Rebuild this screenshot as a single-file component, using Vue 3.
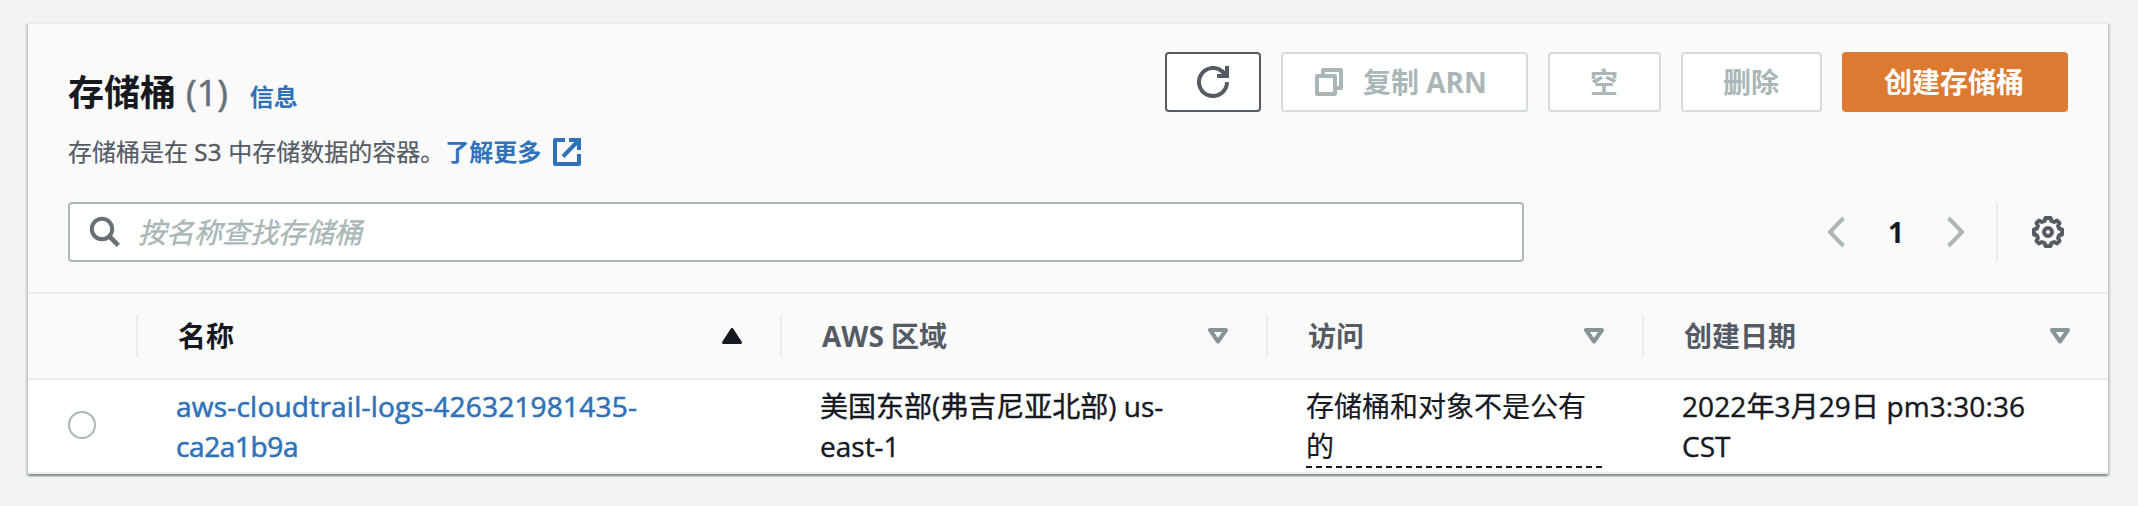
<script setup>
const columns = [
  { key: 'name', label: '名称', sorted: true },
  { key: 'region', label: 'AWS 区域', sorted: false },
  { key: 'access', label: '访问', sorted: false },
  { key: 'created', label: '创建日期', sorted: false },
]
const buckets = [
  {
    name: ['aws-cloudtrail-logs-426321981435-', 'ca2a1b9a'],
    region: ['美国东部(弗吉尼亚北部) us-', 'east-1'],
    access: '存储桶和对象不是公有的',
    created: ['2022年3月29日 pm3:30:36', 'CST'],
  },
]
</script>

<template>
  <main class="page" lang="zh-CN">
    <section class="card">
      <header class="head">
        <div class="heading">
          <h2 class="title">
            <span>存储桶</span><span class="count">(1)</span><a class="info">信息</a>
          </h2>
          <p class="desc">
            <span class="desc-text">存储桶是在 <span class="s3">S3</span> 中存储数据的容器。</span>
            <a class="more">了解更多</a>
            <svg class="ext" width="28" height="28" viewBox="0 0 28 28" fill="none" stroke="currentColor" stroke-width="4">
              <path d="M12 2H2v24h24V16" stroke-linejoin="round" />
              <path d="M16 2h10v10M26 2L10 18.500" />
            </svg>
          </p>
        </div>
        <div class="actions">
          <button class="btn refresh">
            <svg width="32" height="32" viewBox="0 0 32 32" fill="none" stroke="currentColor" stroke-width="4">
              <path d="M30 16a14 14 0 1 1-4.200-10" />
              <path d="M30 0v10H20M29 9l-4-4" />
            </svg>
          </button>
          <button class="btn off copy">
            <svg width="28" height="28" viewBox="0 0 28 28" fill="none" stroke="currentColor" stroke-width="4" stroke-linejoin="round">
              <path d="M2 8h18v18H2z" />
              <path d="M8 8V2h18v18h-6" />
            </svg>
            <span>复制 ARN</span>
          </button>
          <button class="btn off empty">空</button>
          <button class="btn off delete">删除</button>
          <button class="btn primary">创建存储桶</button>
        </div>
      </header>

      <div class="tools">
        <div class="search">
          <svg width="32" height="32" viewBox="0 0 32 32" fill="none" stroke="currentColor" stroke-width="4">
            <circle cx="13" cy="13" r="10.200" />
            <path d="M20.500 20.500l8.800 8.800" stroke-width="4.600" />
          </svg>
          <span class="placeholder">按名称查找存储桶</span>
        </div>
        <nav class="pager">
          <svg class="arrow" width="18" height="32" viewBox="0 0 18 32" fill="none" stroke="currentColor" stroke-width="4">
            <path d="M16.500 2L3 16l13.500 14" />
          </svg>
          <b class="current">1</b>
          <svg class="arrow" width="18" height="32" viewBox="0 0 18 32" fill="none" stroke="currentColor" stroke-width="4">
            <path d="M1.500 2L15 16 1.500 30" />
          </svg>
        </nav>
        <div class="prefs">
          <svg width="32" height="32" viewBox="0 0 32 32" fill="none" stroke="currentColor" stroke-width="4" stroke-linejoin="round">
            <path d="M13.500 2h5l1 3 2.600 1 3-1.400 2.400 2.400-1.400 3 1 2.600 2.900 .9v5l-2.900 .9-1 2.600 1.400 3-2.400 2.400-3-1.400-2.600 1-1 3h-5l-1-3-2.600-1-3 1.400-2.400-2.400 1.400-3-1-2.600L2 18.500v-5l2.900-.9 1-2.600-1.400-3 2.400-2.400 3 1.400 2.600-1z" stroke-width="4" />
            <circle cx="16" cy="16" r="4" />
          </svg>
        </div>
      </div>

      <div class="row thead">
        <div class="pick"></div>
        <div v-for="c in columns" :key="c.key" class="th" :class="{ sorted: c.sorted }">
          <span>{{ c.label }}</span>
          <svg width="20" height="16" viewBox="0 0 20 16" stroke="currentColor" stroke-linejoin="round">
            <path v-if="c.sorted" d="M10 1.500L18.500 14.500H1.500z" fill="currentColor" stroke-width="3" />
            <path v-else d="M2 2h16l-8 11.500z" fill="none" stroke-width="4" />
          </svg>
        </div>
      </div>

      <div v-for="b in buckets" :key="b.name[0]" class="row tbody">
        <div class="pick"><span class="radio"></span></div>
        <div class="td link"><div class="first">{{ b.name[0] }}</div><div class="tail">{{ b.name[1] }}</div></div>
        <div class="td"><div>{{ b.region[0] }}</div><div>{{ b.region[1] }}</div></div>
        <div class="td"><div class="access">{{ b.access }}</div></div>
        <div class="td"><div class="date">{{ b.created[0] }}</div><div>{{ b.created[1] }}</div></div>
      </div>
    </section>
  </main>
</template>

<style>
body {
  margin: 0;
  background: #f2f4f3;
}
</style>

<style scoped>
.page {
  box-sizing: border-box;
  width: 2138px;
  height: 506px;
  padding: 22px 30px 0 28px;
  overflow: hidden;
  background: #f2f4f3;
  color: #16191f;
  font-family: "Open Sans", "Noto Sans CJK SC", sans-serif;
  font-size: 28px;
  line-height: 40px;
}
.card {
  box-sizing: border-box;
  height: 452px;
  border-top: 2px solid #eaeded;
  background: #fafafa;
  box-shadow: 0 2px 2px 0 rgba(0, 28, 36, 0.3), 2px 2px 2px 0 rgba(0, 28, 36, 0.15),
    -2px 2px 2px 0 rgba(0, 28, 36, 0.15);
}
.head {
  display: flex;
  justify-content: space-between;
  box-sizing: border-box;
  height: 178px;
  padding: 28px 40px 0;
}
.heading {
  padding-top: 19px;
}
.title {
  display: flex;
  align-items: baseline;
  margin: 0;
  font-size: 36px;
  line-height: 44px;
}
.count {
  margin-left: 10px;
  color: #687078;
  font-weight: 400;
  -webkit-text-stroke: 0.6px currentColor;
}
.info {
  margin-left: 22px;
  font-size: 24px;
  color: #2f72b9;
}
.desc {
  display: flex;
  align-items: center;
  margin: 17px 0 0;
  color: #545b64;
  font-size: 24px;
  line-height: 32px;
  white-space: nowrap;
}
.desc-text {
  -webkit-text-stroke: 0.2px currentColor;
}
.s3 {
  letter-spacing: 0.4px;
  -webkit-text-stroke: 0.5px currentColor;
}
.more {
  margin-left: 1px;
  color: #2f72b9;
  font-weight: 700;
}
.ext {
  margin-left: 12px;
  color: #2f72b9;
}
.actions {
  display: flex;
  gap: 20px;
}
.btn {
  display: flex;
  align-items: center;
  justify-content: center;
  box-sizing: border-box;
  height: 60px;
  padding: 0 1px 0 0;
  border: 2px solid #545b64;
  border-radius: 4px;
  background: #fff;
  color: #545b64;
  font: inherit;
  font-weight: 700;
  line-height: 40px;
}
.refresh {
  width: 96px;
  padding: 0;
}
.off {
  border-color: #d5dbdb;
  color: #aab7b8;
}
.copy {
  justify-content: flex-start;
  gap: 20px;
  width: 247px;
  padding-left: 32px;
}
.empty {
  width: 113px;
}
.delete {
  width: 141px;
}
.primary {
  width: 226px;
  padding-right: 2px;
  border-color: #dd7a32;
  background: #dd7a32;
  color: #fff;
}
.tools {
  display: flex;
  box-sizing: border-box;
  height: 92px;
  padding: 0 40px 30px;
  border-bottom: 2px solid #eaeded;
}
.search {
  display: flex;
  align-items: center;
  gap: 17px;
  box-sizing: border-box;
  width: 1456px;
  height: 60px;
  padding-left: 19px;
  border: 2px solid #aab7b8;
  border-radius: 4px;
  background: #fff;
  color: #687078;
}
.placeholder {
  color: #aab7b8;
  font-style: italic;
  -webkit-text-stroke: 0.4px currentColor;
}
.pager {
  display: flex;
  align-items: center;
  justify-content: space-between;
  width: 138px;
  height: 60px;
  margin-left: auto;
}
.arrow {
  color: #aab7b8;
}
.current {
  font-size: 28px;
}
.prefs {
  display: flex;
  align-items: center;
  justify-content: flex-end;
  box-sizing: border-box;
  width: 72px;
  height: 60px;
  margin-left: 31px;
  padding-right: 4px;
  border-left: 2px solid #eaeded;
  color: #545b64;
}
.row {
  display: grid;
  grid-template-columns: 108px 644px 486px 376px 466px;
}
.thead {
  align-items: center;
  height: 84px;
  border-bottom: 2px solid #eaeded;
}
.th {
  display: flex;
  align-items: center;
  justify-content: space-between;
  box-sizing: border-box;
  height: 42px;
  padding: 0 38px 0 40px;
  border-left: 2px solid #eaeded;
  color: #545b64;
  font-weight: 700;
}
.th svg {
  color: #879596;
}
.th.sorted,
.th.sorted svg {
  color: #16191f;
}
.tbody {
  box-sizing: border-box;
  height: 94px;
  border-bottom: 2px solid #eaeded;
  background: #fff;
}
.pick {
  display: flex;
  align-items: center;
  padding: 0 0 2px 40px;
}
.radio {
  box-sizing: border-box;
  width: 28px;
  height: 28px;
  border: 2px solid #aab7b8;
  border-radius: 50%;
  background: #fff;
}
.td {
  padding: 6px 38px 0 40px;
  white-space: nowrap;
  -webkit-text-stroke: 0.4px currentColor;
}
.link {
  color: #2f72b9;
  -webkit-text-stroke: 0.6px currentColor;
}
.first {
  letter-spacing: 0.22px;
}
.tail {
  letter-spacing: -0.4px;
}
.date {
  letter-spacing: 0.1px;
}
.access {
  width: 296px;
  white-space: normal;
  padding-bottom: 2px;
  background: repeating-linear-gradient(90deg, #16191f 0 6px, transparent 6px 10px) left bottom / 100% 2px no-repeat;
  -webkit-text-stroke: 0.2px currentColor;
}
</style>
